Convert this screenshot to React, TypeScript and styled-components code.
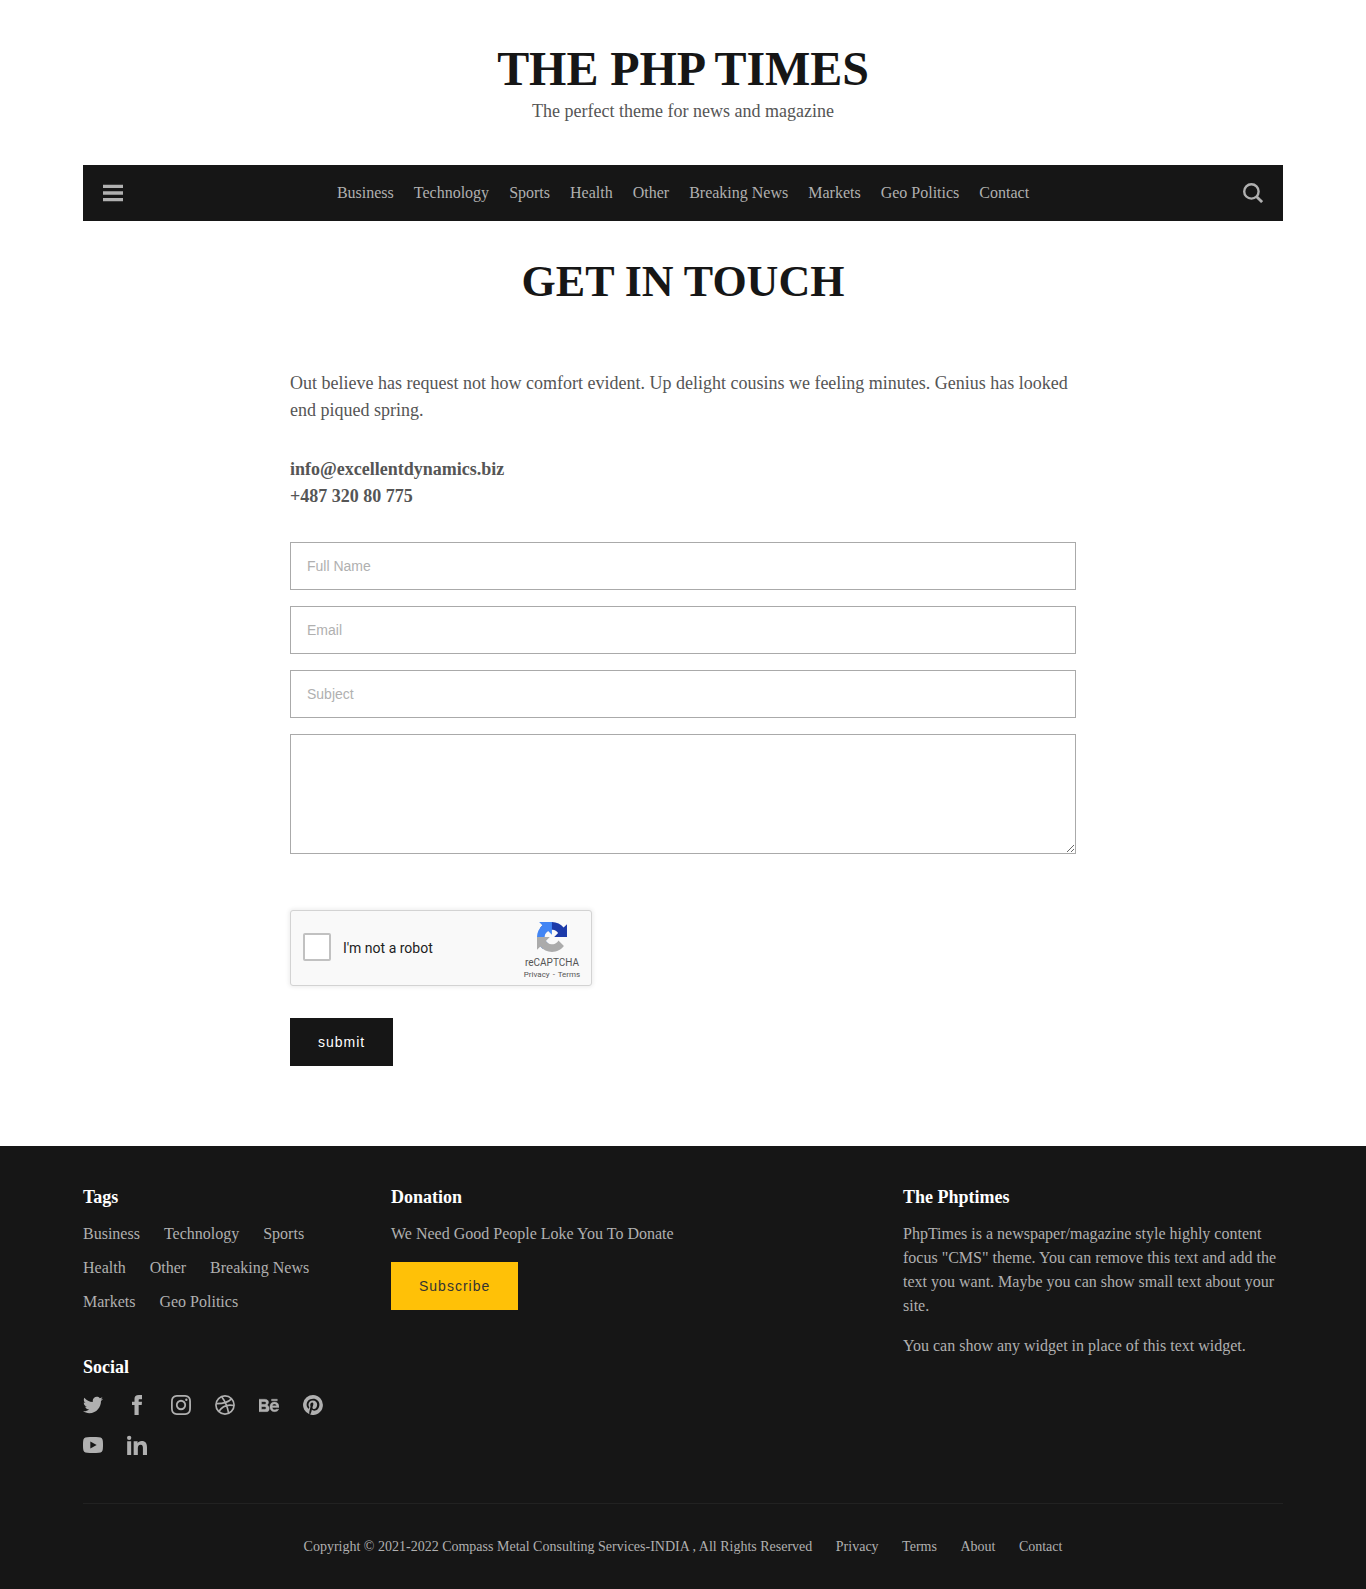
import React from 'react';
import styled, { createGlobalStyle } from 'styled-components';

const SERIF = '"Liberation Serif", "Times New Roman", serif';
const SANS = '"Liberation Sans", Arial, sans-serif';

const GlobalStyle = createGlobalStyle`
  *, *::before, *::after { box-sizing: border-box; }
  body { margin: 0; background: #fff; font-family: ${SERIF}; font-size: 18px; line-height: 27px; color: #555; }
  h1, h2, h3, p, ul { margin: 0; padding: 0; }
  ul { list-style: none; }
  a { color: inherit; text-decoration: none; }
  svg { display: block; }
`;

const Container = styled.div`
  width: 1200px;
  margin: 0 auto;
`;

const Masthead = styled.header`
  height: 165px;
  padding-top: 40px;
  text-align: center;
`;

const SiteTitle = styled.h1`
  font-size: 48px;
  line-height: 58px;
  letter-spacing: -0.07px;
  color: #161616;
`;

const NavBar = styled.nav`
  display: flex;
  align-items: center;
  justify-content: space-between;
  height: 56px;
  padding: 0 20px;
  background: #161616;
  color: #b0b0b0;
`;

const NavList = styled.ul`
  display: flex;
  gap: 20px;
  font-size: 16px;
  line-height: 24px;
`;

const PageTitle = styled.h2`
  margin-top: 35px;
  font-size: 44px;
  line-height: 52px;
  text-align: center;
  color: #161616;
`;

const Main = styled.main`
  width: 786px;
  height: 838px;
  margin: 0 auto;
  padding-top: 62px;
`;

const Contacts = styled.p`
  margin: 32px 0;
  font-weight: 700;
`;

const Form = styled.form`
  display: flex;
  flex-direction: column;
  align-items: flex-start;
  gap: 16px;
`;

const Field = styled.input`
  width: 100%;
  height: 48px;
  padding: 0 16px;
  border: 1px solid #aaa;
  border-radius: 0;
  background: #fff;
  font: 14px ${SANS};
  &::placeholder { color: #b0b0b0; opacity: 1; }
`;

const Message = styled.textarea`
  display: block;
  width: 100%;
  height: 120px;
  padding: 12px 16px;
  border: 1px solid #aaa;
  border-radius: 0;
  font: 14px ${SANS};
`;

const Captcha = styled.div`
  display: flex;
  align-items: center;
  width: 302px;
  height: 76px;
  margin: 40px 0 16px;
  padding: 0 10px 0 12px;
  border: 1px solid #d3d3d3;
  border-radius: 3px;
  background: #f9f9f9;
  box-shadow: 0 0 4px 1px rgba(0, 0, 0, 0.08);
  font-family: Roboto, sans-serif;
  color: #222;
`;

const CheckSquare = styled.span`
  width: 28px;
  height: 28px;
  margin-bottom: 2px;
  border: 2px solid #c1c1c1;
  border-radius: 2px;
  background: #fff;
`;

const CaptchaLabel = styled.span`
  flex: 1;
  margin-left: 12px;
  font-size: 14px;
  line-height: 17px;
`;

const CaptchaBrand = styled.div`
  display: flex;
  flex-direction: column;
  align-items: center;
  width: 58px;
  padding-top: 6px;
  color: #555;
`;

const BrandName = styled.span`
  margin-top: 4px;
  font-size: 10px;
  line-height: 14px;
`;

const BrandLinks = styled.span`
  font-size: 8px;
  line-height: 10px;
  word-spacing: 1px;
  white-space: nowrap;
`;

const Button = styled.button<{ $accent?: boolean }>`
  height: 48px;
  padding: 0 28px;
  border: 0;
  background: ${(p) => (p.$accent ? '#ffc107' : '#161616')};
  color: ${(p) => (p.$accent ? '#333' : '#fff')};
  font: 14px ${SANS};
  letter-spacing: 1px;
`;

const Footer = styled.footer`
  height: 443px;
  background: #161616;
  color: #b0b0b0;
  font-size: 16px;
  line-height: 24px;
`;

const Widgets = styled.div`
  display: grid;
  grid-template-columns: 308px 512px 380px;
  height: 358px;
  padding-top: 38px;
  border-bottom: 1px solid #222;
`;

const WidgetTitle = styled.h3`
  margin-bottom: 11px;
  font-size: 18px;
  line-height: 27px;
  color: #fff;
`;

const TagList = styled.ul`
  display: flex;
  flex-wrap: wrap;
  gap: 10px 24px;
  width: 264px;
  margin-bottom: 40px;
`;

const SocialList = styled.ul`
  display: flex;
  flex-wrap: wrap;
  gap: 20px 24px;
  width: 264px;
  padding-top: 3px;
`;

const Text = styled.p`
  margin-bottom: 16px;
`;

const Legal = styled.div`
  display: flex;
  justify-content: center;
  gap: 23.5px;
  padding-top: 31px;
  font-size: 14px;
`;

const TOPICS = ['Business', 'Technology', 'Sports', 'Health', 'Other', 'Breaking News', 'Markets', 'Geo Politics'];

const Icon = ({ children, name }: { children: React.ReactNode; name: string }) => (
  <svg width="20" height="20" viewBox="0 0 24 24" fill="currentColor" aria-label={name}>
    {children}
  </svg>
);

const SOCIAL: Record<string, React.ReactNode> = {
  Twitter: <path d="M23.954 4.569c-.885.389-1.83.654-2.825.775 1.014-.611 1.794-1.574 2.163-2.723-.951.555-2.005.959-3.127 1.184-.896-.959-2.173-1.559-3.591-1.559-2.717 0-4.92 2.203-4.92 4.917 0 .39.045.765.127 1.124C7.691 8.094 4.066 6.13 1.64 3.161c-.427.722-.666 1.561-.666 2.475 0 1.71.87 3.213 2.188 4.096-.807-.026-1.566-.248-2.228-.616v.061c0 2.385 1.693 4.374 3.946 4.827-.413.111-.849.171-1.296.171-.314 0-.615-.03-.916-.086.631 1.953 2.445 3.377 4.604 3.417-1.68 1.319-3.809 2.105-6.102 2.105-.39 0-.779-.023-1.17-.067 2.189 1.394 4.768 2.209 7.557 2.209 9.054 0 13.999-7.496 13.999-13.986 0-.209 0-.42-.015-.63.961-.689 1.8-1.56 2.46-2.548l-.047-.02z" />,
  Facebook: <path d="M9 8H6v4h3v12h5V12h3.642L18 8h-4V6.333C14 5.378 14.192 5 15.115 5H18V0h-3.808C10.596 0 9 1.583 9 4.615V8z" />,
  Instagram: <path d="M12 0C8.74 0 8.333.015 7.053.072 5.775.132 4.905.333 4.14.63c-.789.306-1.459.717-2.126 1.384S.935 3.35.63 4.14C.333 4.905.131 5.775.072 7.053.012 8.333 0 8.74 0 12s.015 3.667.072 4.947c.06 1.277.261 2.148.558 2.913.306.788.717 1.459 1.384 2.126.667.666 1.336 1.079 2.126 1.384.766.296 1.636.499 2.913.558C8.333 23.988 8.74 24 12 24s3.667-.015 4.947-.072c1.277-.06 2.148-.262 2.913-.558.788-.306 1.459-.718 2.126-1.384.666-.667 1.079-1.335 1.384-2.126.296-.765.499-1.636.558-2.913.06-1.28.072-1.687.072-4.947s-.015-3.667-.072-4.947c-.06-1.277-.262-2.149-.558-2.913-.306-.789-.718-1.459-1.384-2.126C21.319 1.347 20.651.935 19.86.63c-.765-.297-1.636-.499-2.913-.558C15.667.012 15.26 0 12 0zm0 2.16c3.203 0 3.585.016 4.85.071 1.17.055 1.805.249 2.227.415.562.217.96.477 1.382.896.419.42.679.819.896 1.381.164.422.36 1.057.413 2.227.057 1.266.07 1.646.07 4.85s-.015 3.585-.074 4.85c-.061 1.17-.256 1.805-.421 2.227-.224.562-.479.96-.899 1.382-.419.419-.824.679-1.38.896-.42.164-1.065.36-2.235.413-1.274.057-1.649.07-4.859.07-3.211 0-3.586-.015-4.859-.074-1.171-.061-1.816-.256-2.236-.421-.569-.224-.96-.479-1.379-.899-.421-.419-.69-.824-.9-1.38-.165-.42-.359-1.065-.42-2.235-.045-1.26-.061-1.649-.061-4.844 0-3.196.016-3.586.061-4.861.061-1.17.255-1.814.42-2.234.21-.57.479-.96.9-1.381.419-.419.81-.689 1.379-.898.42-.166 1.051-.361 2.221-.421 1.275-.045 1.65-.06 4.859-.06zm0 3.678a6.162 6.162 0 1 0 0 12.324 6.162 6.162 0 1 0 0-12.324zM12 16c-2.21 0-4-1.79-4-4s1.79-4 4-4 4 1.79 4 4-1.79 4-4 4zm7.846-10.405a1.441 1.441 0 1 1-2.88 0 1.44 1.44 0 0 1 2.88 0z" />,
  Dribbble: (
    <g fill="none" stroke="currentColor" strokeWidth="2">
      <circle cx="12" cy="12" r="10.9" />
      <path d="M8 2c3.6 4.6 6.8 10.8 8.4 20M1.2 10.4c8 .2 14.600-1.400 18.900-6M4.600 19.800c4-6.600 10.200-8.900 18.200-7.200" />
    </g>
  ),
  Behance: <path stroke="currentColor" strokeWidth=".4" d="M22 7h-7V5h7v2zm1.726 10c-.442 1.297-2.029 3-5.101 3-3.074 0-5.564-1.729-5.564-5.675 0-3.91 2.325-5.92 5.466-5.92 3.082 0 4.964 1.782 5.375 4.426.078.506.109 1.188.095 2.14H15.97c.13 3.211 3.483 3.312 4.588 2.029h3.168zm-7.686-4h4.965c-.105-1.547-1.136-2.219-2.477-2.219-1.466 0-2.277.768-2.488 2.219zM9.574 19.988H0V5.021h6.953c5.476.081 5.58 5.444 2.72 6.906 3.461 1.26 3.577 8.061-.099 8.061zM3 11h3.584c2.508 0 2.906-3-.312-3H3v3zm3.391 3H3v3.016h3.341c3.055 0 2.868-3.016.05-3.016z" />,
  Pinterest: <path d="M12 0a12 12 0 0 0-4.37 23.17c-.11-.95-.2-2.4.04-3.44l1.4-5.96s-.35-.71-.35-1.78c0-1.66.97-2.91 2.17-2.91 1.02 0 1.52.77 1.52 1.69 0 1.03-.66 2.57-1 4-.28 1.2.61 2.17 1.79 2.17 2.14 0 3.79-2.26 3.79-5.52 0-2.88-2.07-4.9-5.03-4.9-3.43 0-5.44 2.57-5.44 5.23 0 1.03.4 2.15.89 2.75.1.12.11.22.08.35l-.33 1.36c-.05.22-.17.27-.4.16-1.5-.7-2.44-2.89-2.44-4.65 0-3.79 2.75-7.27 7.94-7.27 4.17 0 7.41 2.97 7.41 6.94 0 4.14-2.61 7.48-6.24 7.48-1.22 0-2.36-.63-2.75-1.38l-.75 2.85c-.27 1.05-1 2.36-1.49 3.16A12 12 0 1 0 12 0z" />,
  YouTube: <path fillRule="evenodd" d="M5 2.700c3.800-.4 10.200-.4 14 0C22.300 3 23.600 4.300 23.800 7.300c.3 3 .3 6.400 0 9.400-.2 3-1.500 4.300-4.800 4.600-3.800.4-10.200.4-14 0-3.300-.3-4.600-1.600-4.800-4.600-.3-3-.3-6.400 0-9.400C.4 4.300 1.700 3 5 2.700zM8.800 7.800v8.400L16.400 12z" />,
  LinkedIn: <path d="M5.200 3.400a2.600 2.600 0 1 1-5.200 0 2.600 2.600 0 0 1 5.200 0zM.2 7.600H5V24H.2zM8 7.600h4.700v2.200h.1c.7-1.300 2.300-2.600 4.700-2.600 5 0 6.500 3.200 6.500 7.700V24h-4.900v-7.900c0-1.900-.1-4.300-2.700-4.300s-3.400 2-3.400 4.200v8H8z" />,
};

const MenuIcon = () => (
  <svg width="20" height="20" viewBox="0 0 20 20" fill="currentColor" aria-label="Menu">
    <path d="M0 1.700h20v3.300H0zM0 8.300h20v3.400H0zM0 15h20v3.300H0z" />
  </svg>
);

const SearchIcon = () => (
  <svg width="20" height="20" viewBox="0 0 20 20" fill="none" stroke="currentColor" aria-label="Search">
    <circle cx="8.4" cy="8.400" r="7.200" strokeWidth="2.400" />
    <path d="M13.400 13.400l5.700 5.700" strokeWidth="2.800" />
  </svg>
);

const CaptchaLogo = () => (
  <svg width="30" height="30" viewBox="0 0 64 64" aria-label="reCAPTCHA logo">
    <path fill="#1c3aa9" d="M64 31.955a33.286 33.286 0 0 0-.033-1.37V4.687l-7.16 7.16C50.948 4.674 42.033.093 32.05.093c-10.389 0-19.622 4.96-25.458 12.64l11.736 11.86a15.55 15.55 0 0 1 4.754-5.334c2.05-1.6 4.952-2.906 8.968-2.906.485 0 .86.057 1.135.163 4.976.393 9.288 3.14 11.828 7.124l-8.307 8.307L64 31.953" />
    <path fill="#4285f4" d="M31.862.094a33.15 33.15 0 0 0-1.37.033H4.594l7.16 7.16C4.58 13.147 0 22.06 0 32.046c0 10.389 4.96 19.622 12.64 25.458L24.5 45.768a15.55 15.55 0 0 1-5.334-4.754c-1.6-2.05-2.906-4.952-2.906-8.968 0-.485.057-.86.163-1.135.393-4.976 3.14-9.288 7.124-11.828l8.307 8.307L31.86.095" />
    <path fill="#ababab" d="M.001 32.045c.008.46.016.917.033 1.37v25.898l7.16-7.16c5.86 7.173 14.774 11.754 24.76 11.754 10.389 0 19.622-4.96 25.458-12.64l-11.736-11.86a15.55 15.55 0 0 1-4.754 5.334c-2.05 1.6-4.952 2.906-8.968 2.906-.485 0-.86-.057-1.135-.163-4.976-.393-9.288-3.14-11.828-7.124l8.307-8.307C20.778 32.094 8.92 32.118.001 32.045" />
  </svg>
);

export default function App() {
  return (
    <>
      <GlobalStyle />
      <Container>
        <Masthead>
          <SiteTitle>THE PHP TIMES</SiteTitle>
          <p>The perfect theme for news and magazine</p>
        </Masthead>
        <NavBar>
          <MenuIcon />
          <NavList>
            {[...TOPICS, 'Contact'].map((item) => (
              <li key={item}><a href="#">{item}</a></li>
            ))}
          </NavList>
          <SearchIcon />
        </NavBar>
        <PageTitle>GET IN TOUCH</PageTitle>
        <Main>
          <p>
            Out believe has request not how comfort evident. Up delight cousins we feeling minutes. Genius has looked end
            piqued spring.
          </p>
          <Contacts>
            info@excellentdynamics.biz
            <br />
            +487 320 80 775
          </Contacts>
          <Form onSubmit={(e) => e.preventDefault()}>
            <Field placeholder="Full Name" />
            <Field placeholder="Email" />
            <Field placeholder="Subject" />
            <Message />
            <Captcha>
              <CheckSquare />
              <CaptchaLabel>I'm not a robot</CaptchaLabel>
              <CaptchaBrand>
                <CaptchaLogo />
                <BrandName>reCAPTCHA</BrandName>
                <BrandLinks>Privacy - Terms</BrandLinks>
              </CaptchaBrand>
            </Captcha>
            <Button type="submit">submit</Button>
          </Form>
        </Main>
      </Container>
      <Footer>
        <Container>
          <Widgets>
            <section>
              <WidgetTitle>Tags</WidgetTitle>
              <TagList>
                {TOPICS.map((item) => (
                  <li key={item}><a href="#">{item}</a></li>
                ))}
              </TagList>
              <WidgetTitle>Social</WidgetTitle>
              <SocialList>
                {Object.entries(SOCIAL).map(([name, shape]) => (
                  <li key={name}><Icon name={name}>{shape}</Icon></li>
                ))}
              </SocialList>
            </section>
            <section>
              <WidgetTitle>Donation</WidgetTitle>
              <Text>We Need Good People Loke You To Donate</Text>
              <Button $accent>Subscribe</Button>
            </section>
            <section>
              <WidgetTitle>The Phptimes</WidgetTitle>
              <Text>
                PhpTimes is a newspaper/magazine style highly content focus "CMS" theme. You can remove this text and add
                the text you want. Maybe you can show small text about your site.
              </Text>
              <Text>You can show any widget in place of this text widget.</Text>
            </section>
          </Widgets>
          <Legal>
            <span>Copyright © 2021-2022 Compass Metal Consulting Services-INDIA , All Rights Reserved</span>
            <a href="#">Privacy</a>
            <a href="#">Terms</a>
            <a href="#">About</a>
            <a href="#">Contact</a>
          </Legal>
        </Container>
      </Footer>
    </>
  );
}
